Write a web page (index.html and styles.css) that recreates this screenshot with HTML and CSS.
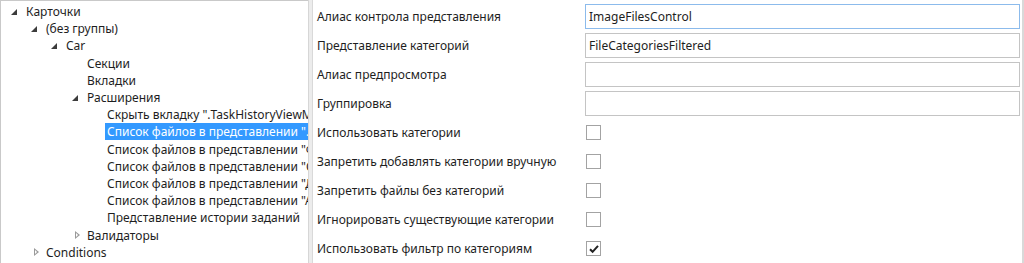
FILE: index.html
```html
<!DOCTYPE html>
<html lang="ru">

<head>
    <meta charset="UTF-8">
    <meta name="viewport" content="width=device-width, initial-scale=1.0">
    <title>Карточки</title>
    <link rel="stylesheet" href="styles.css">
</head>

<body>
    <section class="editor">
        <div class="tree">
            <div class="tree-row lvl-0"><span class="toggle open"></span><span class="node">Карточки</span></div>
            <div class="tree-row lvl-1"><span class="toggle open"></span><span class="node">(без группы)</span></div>
            <div class="tree-row lvl-2"><span class="toggle open"></span><span class="node">Car</span></div>
            <div class="tree-row lvl-3"><span class="toggle"></span><span class="node">Секции</span></div>
            <div class="tree-row lvl-3"><span class="toggle"></span><span class="node">Вкладки</span></div>
            <div class="tree-row lvl-3"><span class="toggle open"></span><span class="node">Расширения</span></div>
            <div class="tree-row lvl-4"><span class="toggle"></span><span class="node">Скрыть вкладку ".TaskHistoryViewModel"</span></div>
            <div class="tree-row lvl-4"><span class="toggle"></span><span class="node selected">Список файлов в представлении ".ImageFilesControl"</span></div>
            <div class="tree-row lvl-4"><span class="toggle"></span><span class="node">Список файлов в представлении "Файлы"</span></div>
            <div class="tree-row lvl-4"><span class="toggle"></span><span class="node">Список файлов в представлении "Связи"</span></div>
            <div class="tree-row lvl-4"><span class="toggle"></span><span class="node">Список файлов в представлении "Документы"</span></div>
            <div class="tree-row lvl-4"><span class="toggle"></span><span class="node">Список файлов в представлении "Архив"</span></div>
            <div class="tree-row lvl-4"><span class="toggle"></span><span class="node">Представление истории заданий</span></div>
            <div class="tree-row lvl-3"><span class="toggle closed"></span><span class="node">Валидаторы</span></div>
            <div class="tree-row lvl-1"><span class="toggle closed"></span><span class="node">Conditions</span></div>
        </div>

        <div class="splitter"></div>

        <div class="props">
            <span class="prop-label">Алиас контрола представления</span>
            <input class="prop-text focused" type="text" value="ImageFilesControl">

            <span class="prop-label">Представление категорий</span>
            <input class="prop-text" type="text" value="FileCategoriesFiltered">

            <span class="prop-label">Алиас предпросмотра</span>
            <input class="prop-text" type="text" value="">

            <span class="prop-label">Группировка</span>
            <input class="prop-text" type="text" value="">

            <span class="prop-label">Использовать категории</span>
            <span class="check"></span>

            <span class="prop-label">Запретить добавлять категории вручную</span>
            <span class="check"></span>

            <span class="prop-label">Запретить файлы без категорий</span>
            <span class="check"></span>

            <span class="prop-label">Игнорировать существующие категории</span>
            <span class="check"></span>

            <span class="prop-label">Использовать фильтр по категориям</span>
            <span class="check checked">
                <svg width="12" height="12" viewBox="0 0 12 12"><path d="M2 6.2 L4.6 8.8 L10 2.8" fill="none" stroke="#222" stroke-width="2"/></svg>
            </span>
        </div>
    </section>
</body>

</html>
```

FILE: styles.css
```css
* {
    margin: 0;
    padding: 0;
    box-sizing: border-box;
}

body {
    font-family: "Noto Sans", "Open Sans", sans-serif;
    font-size: 12px;
    color: #1e1e1e;
    background: #fff;
}

.editor {
    display: flex;
    height: 263px;
}

.tree {
    width: 308px;
    flex-shrink: 0;
    border-top: 1px solid #c9c9c9;
    border-left: 1px solid #c9c9c9;
    padding-top: 2px;
    overflow: hidden;
}

.tree-row {
    display: flex;
    align-items: center;
    height: 17.2px;
    white-space: nowrap;
    overflow: hidden;
}

.tree-row.lvl-0 { padding-left: 9px; }
.tree-row.lvl-1 { padding-left: 29px; }
.tree-row.lvl-2 { padding-left: 49px; }
.tree-row.lvl-3 { padding-left: 70px; }
.tree-row.lvl-4 { padding-left: 90px; }

.toggle {
    width: 14px;
    height: 17px;
    flex-shrink: 0;
    position: relative;
}

.toggle.open::before {
    content: "";
    position: absolute;
    left: 1px;
    top: 6px;
    border-style: solid;
    border-width: 0 0 6px 6px;
    border-color: transparent transparent #3c3c3c transparent;
}

.toggle.closed::before {
    content: "";
    position: absolute;
    left: 4px;
    top: 4px;
    width: 0;
    height: 0;
    border-style: solid;
    border-width: 4.5px 0 4.5px 5px;
    border-color: transparent transparent transparent #9a9a9a;
}

.toggle.closed::after {
    content: "";
    position: absolute;
    left: 5px;
    top: 6px;
    border-style: solid;
    border-width: 2.5px 0 2.5px 2.8px;
    border-color: transparent transparent transparent #fff;
}

.node {
    padding: 0 2px;
    line-height: 17px;
    min-width: 0;
    overflow: hidden;
    white-space: nowrap;
}

.node.selected {
    background: #3399ff;
    color: #fff;
}

.splitter {
    width: 5px;
    flex-shrink: 0;
    border-left: 1px solid #d6d6d6;
    background: #ececec;
    border-right: 1px solid #d9d9d9;
}

.props {
    flex: 1;
    display: grid;
    grid-template-columns: 268px 1fr;
    grid-auto-rows: 25px;
    row-gap: 4px;
    align-items: center;
    padding: 4px 2px 0 4px;
    border-right: 2px solid #d9d9d9;
}

.prop-label {
    white-space: nowrap;
}

.prop-text {
    height: 25px;
    width: 100%;
    border: 1px solid #c4c4c4;
    padding: 0 3px;
    font: inherit;
    color: #1e1e1e;
    outline: none;
}

.prop-text.focused {
    border-color: #8cbbec;
}

.check {
    width: 15px;
    height: 15px;
    margin-left: 1px;
    border: 1px solid #a3a3a3;
    background: #fff;
    display: flex;
    align-items: center;
    justify-content: center;
}
```
